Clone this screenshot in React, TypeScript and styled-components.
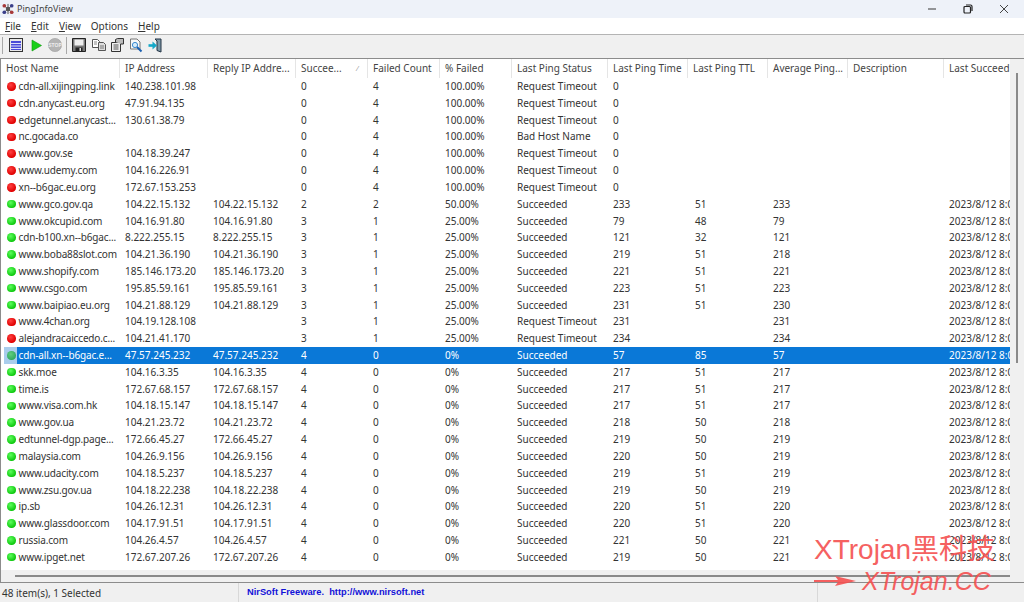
import styled, { createGlobalStyle } from "styled-components";

const GlobalStyle = createGlobalStyle`
  html, body {
    margin: 0;
    padding: 0;
    background: #f0f0f0;
  }
  body {
    font-family: "Noto Sans", "Open Sans", sans-serif;
    color: #333;
  }
`;

const colunas = "119px 88px 88px 72px 72px 72px 96px 80px 80px 80px 96px 66px";

const Janela = styled.div`
  position: relative;
  width: 1024px;
  height: 602px;
  display: flex;
  flex-direction: column;
  overflow: hidden;
`;

const BarraTitulo = styled.div`
  height: 18px;
  display: flex;
  align-items: center;
  justify-content: space-between;
  background: #eef2f9;
  font-size: 9px;
  color: #444;
`;

const Titulo = styled.div`
  display: flex;
  align-items: center;
  gap: 3px;
  padding-left: 2px;
  padding-bottom: 1px;
`;

const BotoesJanela = styled.div`
  display: flex;
  align-items: center;
  gap: 26px;
  padding-right: 15px;
`;

const Menu = styled.div`
  height: 16px;
  display: flex;
  align-items: center;
  gap: 10px;
  padding-left: 5px;
  background: #fff;
  border-bottom: 1px solid #b4b4b4;
  font-size: 10px;
  color: #333;
`;

const BarraFerramentas = styled.div`
  height: 20px;
  padding-bottom: 3px;
  display: flex;
  align-items: center;
  padding-left: 2px;
  background: #f0f0f0;
`;

const Divisor = styled.div`
  flex: none;
  width: 1px;
  height: 17px;
  background: #a8a8a8;
`;

const BotaoFerramenta = styled.div<{ $largura?: number }>`
  flex: none;
  width: ${(p) => p.$largura ?? 18.5}px;
  display: flex;
  align-items: center;
  justify-content: center;
`;

const Lista = styled.div`
  flex: 1;
  display: grid;
  grid-template-columns: 1009px 1fr;
  grid-template-rows: 1fr 12px;
  border-top: 1px solid #8c8c8c;
  border-left: 1px solid #8c8c8c;
  border-bottom: 1px solid #8c8c8c;
  background: #f0f0f0;
  min-height: 0;
`;

const Tabela = styled.div`
  background: #fff;
  overflow: hidden;
`;

const Cabecalho = styled.div`
  display: grid;
  grid-template-columns: ${colunas};
  height: 19px;
  font-size: 10px;
  color: #444;
`;

const CelulaCabecalho = styled.div`
  display: flex;
  align-items: center;
  justify-content: space-between;
  padding: 0 0 1px 5px;
  border-right: 1px solid #e5e5e5;
  white-space: nowrap;
  overflow: hidden;

  &:last-child {
    border-right: none;
  }
`;

const Seta = styled.span`
  margin-right: 9px;
  font-size: 7px;
  color: #888;
`;

const Linha = styled.div<{ $selecionada?: boolean }>`
  display: grid;
  grid-template-columns: ${colunas};
  height: 16.82px;
  line-height: 16.82px;
  font-size: 10px;
  color: ${(p) => (p.$selecionada ? "#fff" : "#333")};
  background: ${(p) =>
    p.$selecionada
      ? "linear-gradient(90deg, transparent 3px, #a9cdec 3px, #a9cdec 16px, #0a78d7 16px)"
      : "transparent"};
`;

const Celula = styled.div<{ $recuo?: number }>`
  padding-left: ${(p) => p.$recuo ?? 5}px;
  white-space: nowrap;
  overflow: hidden;
`;

const CelulaHost = styled.div`
  display: flex;
  align-items: center;
  gap: 3px;
  padding-left: 6px;
  letter-spacing: -0.15px;
  white-space: nowrap;
  overflow: hidden;
`;

const Bolinha = styled.span<{ $cor: "verde" | "vermelho"; $selecionada?: boolean }>`
  flex: none;
  width: 8.5px;
  height: 8.5px;
  border-radius: 50%;
  background: ${(p) =>
    p.$selecionada
      ? "radial-gradient(circle at 40% 35%, #5fcf7f, #1f9a55)"
      : p.$cor === "verde"
        ? "radial-gradient(circle at 40% 35%, #5cff5c, #0fc80f 70%)"
        : "radial-gradient(circle at 40% 35%, #ff4040, #e00000 70%)"};
`;

const BarraVertical = styled.div`
  display: flex;
  justify-content: center;
  padding: 14px 0 0;
  margin-right: 1px;

  &::after {
    content: "";
    width: 2px;
    height: 290px;
    background: #8a8a8a;
  }
`;

const BarraHorizontal = styled.div`
  display: flex;
  align-items: center;
  padding-left: 14px;

  &::after {
    content: "";
    width: 995px;
    height: 2px;
    background: #8a8a8a;
  }
`;

const Status = styled.div`
  height: 19px;
  display: grid;
  grid-template-columns: 239px 579px 1fr;
  background: #f0f0f0;
  font-size: 10px;
  color: #333;
`;

const SecaoStatus = styled.div`
  display: flex;
  align-items: center;
  padding-left: 2px;
  border-right: 1px solid #d8d8d8;

  &:last-child {
    border-right: none;
  }
`;

const LinkNirsoft = styled.span`
  padding-left: 6px;
  padding-bottom: 1px;
  font-family: "Liberation Sans", Arial, sans-serif;
  font-weight: 700;
  font-size: 9.3px;
  color: #1212d8;
  white-space: pre;
`;

const MarcaDagua = styled.div`
  position: absolute;
  left: 814px;
  top: 536px;
  color: #f55050;
  opacity: 0.9;
  font-family: "Liberation Sans", "Noto Sans CJK SC", sans-serif;
  pointer-events: none;
`;

const MarcaTitulo = styled.div`
  font-size: 28px;
  line-height: 28px;
  white-space: nowrap;
`;

const MarcaEndereco = styled.div`
  display: flex;
  align-items: center;
  gap: 6px;
  font-size: 25px;
  line-height: 34px;
  font-style: italic;
  white-space: nowrap;
`;

type Registro = [string, string, string, string, string, string, string, string, string, string, boolean];

const falha = (host: string, ip: string, status = "Request Timeout"): Registro => [
  host, ip, "", "0", "4", "100.00%", status, "0", "", "", false,
];

const ok = (
  host: string, ip: string, s: string, f: string, pct: string,
  tempo: string, ttl: string, media: string,
): Registro => [host, ip, ip, s, f, pct, "Succeeded", tempo, ttl, media, true];

const timeout = (host: string, ip: string, tempo: string): Registro => [
  host, ip, "", "3", "1", "25.00%", "Request Timeout", tempo, "", tempo, true,
];

const registros: Registro[] = [
  falha("cdn-all.xijingping.link", "140.238.101.98"),
  falha("cdn.anycast.eu.org", "47.91.94.135"),
  falha("edgetunnel.anycast...", "130.61.38.79"),
  falha("nc.gocada.co", "", "Bad Host Name"),
  falha("www.gov.se", "104.18.39.247"),
  falha("www.udemy.com", "104.16.226.91"),
  falha("xn--b6gac.eu.org", "172.67.153.253"),
  ok("www.gco.gov.qa", "104.22.15.132", "2", "2", "50.00%", "233", "51", "233"),
  ok("www.okcupid.com", "104.16.91.80", "3", "1", "25.00%", "79", "48", "79"),
  ok("cdn-b100.xn--b6gac...", "8.222.255.15", "3", "1", "25.00%", "121", "32", "121"),
  ok("www.boba88slot.com", "104.21.36.190", "3", "1", "25.00%", "219", "51", "218"),
  ok("www.shopify.com", "185.146.173.20", "3", "1", "25.00%", "221", "51", "221"),
  ok("www.csgo.com", "195.85.59.161", "3", "1", "25.00%", "223", "51", "223"),
  ok("www.baipiao.eu.org", "104.21.88.129", "3", "1", "25.00%", "231", "51", "230"),
  timeout("www.4chan.org", "104.19.128.108", "231"),
  timeout("alejandracaiccedo.c...", "104.21.41.170", "234"),
  ok("cdn-all.xn--b6gac.e...", "47.57.245.232", "4", "0", "0%", "57", "85", "57"),
  ok("skk.moe", "104.16.3.35", "4", "0", "0%", "217", "51", "217"),
  ok("time.is", "172.67.68.157", "4", "0", "0%", "217", "51", "217"),
  ok("www.visa.com.hk", "104.18.15.147", "4", "0", "0%", "217", "51", "217"),
  ok("www.gov.ua", "104.21.23.72", "4", "0", "0%", "218", "50", "218"),
  ok("edtunnel-dgp.page...", "172.66.45.27", "4", "0", "0%", "219", "50", "219"),
  ok("malaysia.com", "104.26.9.156", "4", "0", "0%", "220", "50", "219"),
  ok("www.udacity.com", "104.18.5.237", "4", "0", "0%", "219", "51", "219"),
  ok("www.zsu.gov.ua", "104.18.22.238", "4", "0", "0%", "219", "50", "219"),
  ok("ip.sb", "104.26.12.31", "4", "0", "0%", "220", "51", "220"),
  ok("www.glassdoor.com", "104.17.91.51", "4", "0", "0%", "220", "51", "220"),
  ok("russia.com", "104.26.4.57", "4", "0", "0%", "221", "50", "221"),
  ok("www.ipget.net", "172.67.207.26", "4", "0", "0%", "219", "50", "221"),
];

const titulos = [
  "Host Name", "IP Address", "Reply IP Addre...", "Succee...", "Failed Count", "% Failed",
  "Last Ping Status", "Last Ping Time", "Last Ping TTL", "Average Ping...", "Description", "Last Succeed",
];

function IconeApp() {
  return (
    <svg width="12" height="12" viewBox="0 0 13 13">
      <path d="M2.5 3 10.5 10M10.5 3 2.5 10M6.5 1v11" stroke="#444" />
      <circle cx="6.5" cy="6.5" r="2.4" fill="#555" />
      <circle cx="2.5" cy="3" r="2" fill="#a83a3a" />
      <circle cx="10.5" cy="3" r="2" fill="#3a3f8a" />
      <circle cx="2.5" cy="10" r="2" fill="#3a3f8a" />
      <circle cx="10.5" cy="10" r="2" fill="#a83a3a" />
    </svg>
  );
}

function IconesToolbar() {
  return (
    <>
      <Divisor />
      <BotaoFerramenta $largura={25}>
        <svg width="14" height="14" viewBox="0 0 14 14">
          <rect x="0.5" y="0.5" width="13" height="13" fill="#e8e8e8" stroke="#333" />
          <rect x="2" y="3" width="10" height="9" fill="#4a4ad8" />
          <path d="M2 5.5h10M2 8h10M2 10.5h10" stroke="#dfe0fa" />
        </svg>
      </BotaoFerramenta>
      <BotaoFerramenta $largura={17}>
        <svg width="11" height="13" viewBox="0 0 11 13">
          <path d="M1 1 10.5 6.5 1 12z" fill="#18d018" stroke="#0c9a0c" strokeWidth="0.6" />
        </svg>
      </BotaoFerramenta>
      <BotaoFerramenta $largura={19}>
        <svg width="14" height="14" viewBox="0 0 14 14">
          <circle cx="7" cy="7" r="6.6" fill="#b4b4b4" stroke="#9c9c9c" strokeWidth="0.6" />
          <text x="7" y="8.8" textAnchor="middle" fontSize="5" fontWeight="700" fontFamily="Liberation Sans" fill="#eee">STOP</text>
        </svg>
      </BotaoFerramenta>
      <BotaoFerramenta $largura={4}>
        <Divisor />
      </BotaoFerramenta>
      <BotaoFerramenta $largura={22}>
        <svg width="14" height="14" viewBox="0 0 14 14">
          <path d="M0.5 0.5h13v13h-13z" fill="#777" stroke="#222" />
          <rect x="2.5" y="1.5" width="9" height="6" fill="#eee" />
          <rect x="3.5" y="9.5" width="7" height="4" fill="#222" />
          <rect x="7.5" y="10" width="1.5" height="3" fill="#ddd" />
        </svg>
      </BotaoFerramenta>
      <BotaoFerramenta>
        <svg width="14" height="12" viewBox="0 0 14 12">
          <path d="M0.5 0.5h5l2 2v6h-7z" fill="#fff" stroke="#555" />
          <path d="M2 3h3M2 5h3" stroke="#888" />
          <path d="M6.5 3.5h5l2 2v6h-7z" fill="#ddd" stroke="#555" />
          <path d="M8 7h4M8 9h4" stroke="#777" />
        </svg>
      </BotaoFerramenta>
      <BotaoFerramenta>
        <svg width="13" height="14" viewBox="0 0 13 14">
          <path d="M0.5 4.5h9v9h-9z" fill="#eee" stroke="#333" />
          <path d="M2.5 7h5M2.5 9h5M2.5 11h5" stroke="#555" />
          <path d="M4.5 4V1.5l2-1h6v5.5H10" fill="#bbb" stroke="#333" />
        </svg>
      </BotaoFerramenta>
      <BotaoFerramenta>
        <svg width="14" height="15" viewBox="0 0 14 15">
          <path d="M1.5 1h6.5l3 3v7H1.5z" fill="#f7f7f7" stroke="#777" />
          <circle cx="6" cy="7" r="2.6" fill="#d8ecfa" stroke="#3a8ad0" />
          <path d="M8 9l4.5 4.5" stroke="#1a5fb0" strokeWidth="2" />
        </svg>
      </BotaoFerramenta>
      <BotaoFerramenta>
        <svg width="14" height="15" viewBox="0 0 14 15">
          <path d="M7 1h6v13l-4-1.5V3z" fill="#7f9aa8" stroke="#234" />
          <path d="M0.5 7.5h5" stroke="#14a8c8" strokeWidth="2.6" />
          <path d="M4.5 3.5 9 7.5l-4.5 4z" fill="#14a8c8" />
        </svg>
      </BotaoFerramenta>
    </>
  );
}

export default function App() {
  return (
    <Janela>
      <GlobalStyle />
      <BarraTitulo>
        <Titulo>
          <IconeApp />
          PingInfoView
        </Titulo>
        <BotoesJanela>
          <svg width="10" height="10" viewBox="0 0 10 10">
            <path d="M1 5h8" stroke="#555" strokeWidth="1.2" />
          </svg>
          <svg width="10" height="10" viewBox="0 0 10 10" fill="none" stroke="#222" strokeWidth="1.2">
            <rect x="1" y="2.5" width="6.5" height="6.5" rx="1" />
            <path d="M3 1h4.5a1.5 1.5 0 0 1 1.5 1.5V7" />
          </svg>
          <svg width="10" height="10" viewBox="0 0 10 10">
            <path d="M1 1l8 8M9 1 1 9" stroke="#444" />
          </svg>
        </BotoesJanela>
      </BarraTitulo>
      <Menu>
        <span><u>F</u>ile</span>
        <span><u>E</u>dit</span>
        <span><u>V</u>iew</span>
        <span>Options</span>
        <span><u>H</u>elp</span>
      </Menu>
      <BarraFerramentas>
        <IconesToolbar />
      </BarraFerramentas>
      <Lista>
        <Tabela>
          <Cabecalho>
            {titulos.map((titulo) => (
              <CelulaCabecalho key={titulo}>
                {titulo}
                {titulo === "Succee..." && <Seta>⁄</Seta>}
              </CelulaCabecalho>
            ))}
          </Cabecalho>
          {registros.map((r, i) => {
            const selecionada = i === 16;
            return (
              <Linha key={r[0] + i} $selecionada={selecionada}>
                <CelulaHost>
                  <Bolinha $cor={r[6] === "Succeeded" ? "verde" : "vermelho"} $selecionada={selecionada} />
                  {r[0]}
                </CelulaHost>
                {r.slice(1, 8).map((valor, j) => (
                  <Celula key={j}>{valor}</Celula>
                ))}
                <Celula $recuo={7}>{r[8]}</Celula>
                <Celula>{r[9]}</Celula>
                <Celula />
                <Celula>{r[10] ? "2023/8/12 8:00:15" : ""}</Celula>
              </Linha>
            );
          })}
        </Tabela>
        <BarraVertical />
        <BarraHorizontal />
      </Lista>
      <Status>
        <SecaoStatus>48 item(s), 1 Selected</SecaoStatus>
        <SecaoStatus>
          <LinkNirsoft>NirSoft Freeware.  http://www.nirsoft.net</LinkNirsoft>
        </SecaoStatus>
        <SecaoStatus />
      </Status>
      <MarcaDagua>
        <MarcaTitulo>XTrojan黑科技</MarcaTitulo>
        <MarcaEndereco>
          <svg width="42" height="12" viewBox="0 0 42 12">
            <path d="M0 5h24L21 1l21 5-21 5 3-4H0z" fill="#f55050" />
          </svg>
          XTrojan.CC
        </MarcaEndereco>
      </MarcaDagua>
    </Janela>
  );
}
